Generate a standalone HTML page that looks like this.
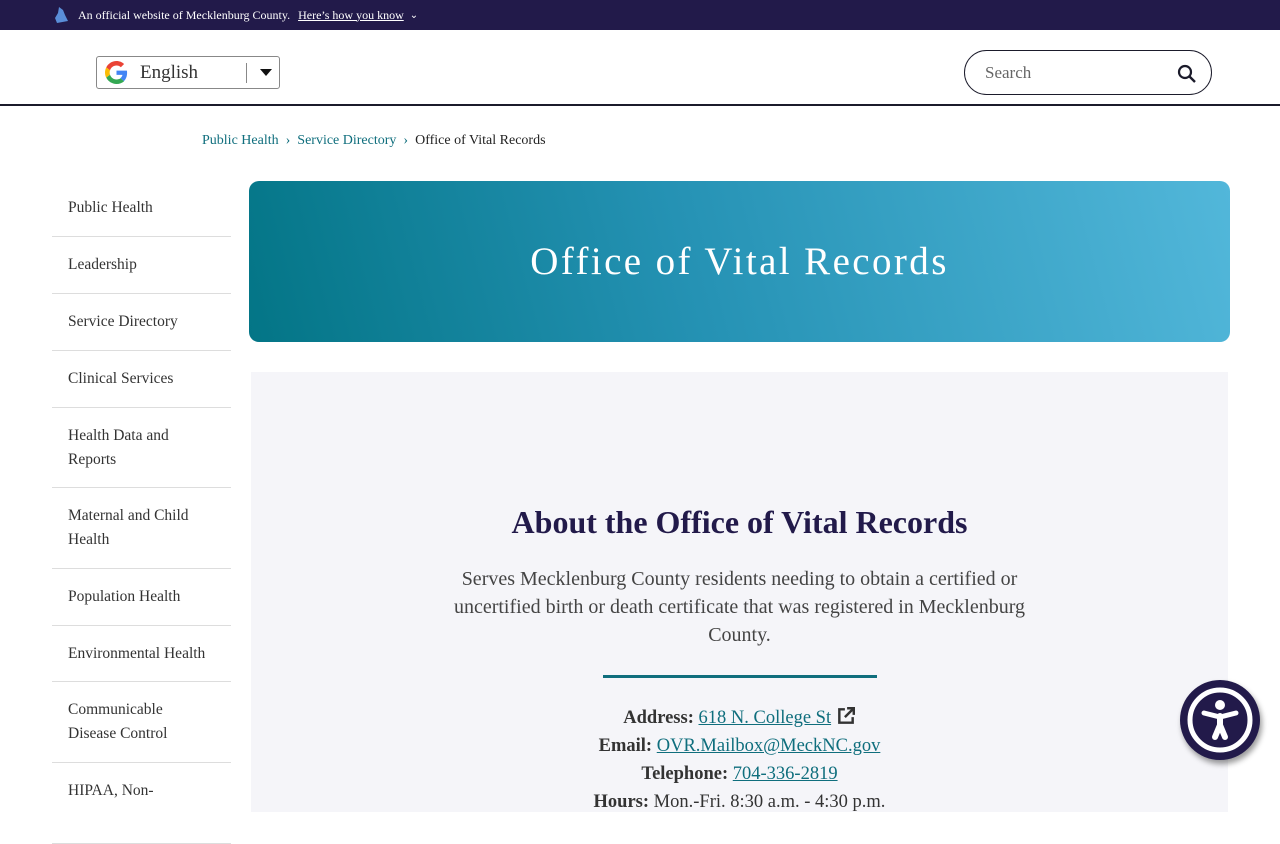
<!DOCTYPE html>
<html><head><meta charset="utf-8"><style>
*{box-sizing:border-box;margin:0;padding:0}
body{width:1280px;height:800px;overflow:hidden;background:#fff;font-family:"Liberation Serif",serif;position:relative}
.top{height:30px;background:#221a4a;color:#fff;font-size:12px;display:flex;align-items:center;padding-left:54px}
.top a{color:#fff;text-decoration:underline;margin-left:8px}
.hdr{height:76px;border-bottom:2px solid #1b1b2b;position:relative}
.lang{position:absolute;left:96px;top:26px;width:184px;height:33px;border:1px solid #888;border-radius:3px;display:flex;align-items:center;font-size:19px;color:#333}
.search{position:absolute;left:964px;top:20px;width:248px;height:45px;border:1px solid #1b1b2b;border-radius:23px;font-size:17px;color:#666;padding:12px 0 0 20px}
.bc{position:absolute;top:133px;left:202px;font-size:14px;color:#222}
.bc a{color:#0f6e7d;text-decoration:none}
.bc span.s{color:#0f6e7d;margin:0 7px}
.side{position:absolute;left:52px;top:180px;width:179px}
.side div{border-bottom:1px solid #ddd;padding:0 16px;font-size:15.5px;color:#333;line-height:24px;display:flex;align-items:center}
.side div span{width:142px}
.hero{position:absolute;left:249px;top:181px;width:981px;height:161px;border-radius:10px;background:linear-gradient(75deg,#037586 0%,#2592b4 45%,#52b7da 100%);color:#fff;font-size:39px;letter-spacing:2.4px;text-align:center;line-height:161px}
.box{position:absolute;left:251px;top:372px;width:977px;height:440px;background:#f5f5f9;text-align:center}
h2{font-size:32px;color:#221a4a;margin-top:132px}
.p{font-size:20px;color:#444;line-height:28px;width:600px;margin:24px auto 0}
.hr{width:274px;height:3px;background:#0f6e7d;margin:26px auto 0}
.c{font-size:18.5px;color:#333;line-height:28px;margin-top:26px}
.c b{color:#333}.c a{color:#0f6e7d;text-decoration:underline}
.acc{position:absolute;left:1180px;top:680px;width:80px;height:80px;border-radius:50%;background:#221a4a;box-shadow:2px 4px 6px rgba(0,0,0,.4)}
</style></head><body>
<div class="top"><svg width="16" height="18" viewBox="0 0 16 18"><path d="M5 1 L9 4 L11 9 L14 15 L3 17 L1 12 L4 7Z" fill="#5a8ed8"/></svg><span style="margin-left:8px">An official website of Mecklenburg County.</span><a>Here’s how you know</a><span style="margin-left:6px;font-size:10px">⌄</span></div>
<div class="hdr">
<div class="lang"><svg style="margin:0 12px 0 8px" width="23" height="23" viewBox="0 0 48 48"><path fill="#EA4335" d="M24 9.5c3.5 0 6.6 1.2 9.1 3.6l6.8-6.8C35.8 2.4 30.3 0 24 0 14.6 0 6.6 5.4 2.6 13.3l7.9 6.2C12.4 13.6 17.7 9.5 24 9.5z"/><path fill="#4285F4" d="M46.1 24.5c0-1.6-.1-3.1-.4-4.5H24v9h12.4c-.5 2.9-2.2 5.4-4.7 7l7.7 6c4.4-4.1 6.7-10.1 6.7-17.5z"/><path fill="#FBBC05" d="M10.5 28.6c-.5-1.4-.8-3-.8-4.6s.3-3.2.8-4.6l-7.9-6.2C.9 16.5 0 20.1 0 24s.9 7.5 2.6 10.8l7.9-6.2z"/><path fill="#34A853" d="M24 48c6.5 0 11.9-2.1 15.9-5.8l-7.7-6c-2.1 1.4-4.9 2.3-8.2 2.3-6.3 0-11.6-4.2-13.5-9.9l-7.9 6.2C6.6 42.6 14.6 48 24 48z"/></svg>English<span style="position:absolute;left:149px;top:6px;width:1px;height:20px;background:#888"></span><span style="position:absolute;left:163px;top:12px;border:6px solid transparent;border-top:7px solid #111"></span></div>
<div class="search">Search<svg style="position:absolute;right:14px;top:13px" width="20" height="20" viewBox="0 0 20 20"><circle cx="8" cy="8" r="6" stroke="#1b1b2b" stroke-width="2.2" fill="none"/><path d="M12.5 12.5L18 18" stroke="#1b1b2b" stroke-width="2.4"/></svg></div>
</div>
<div class="bc"><a>Public Health</a><span class="s">›</span><a>Service Directory</a><span class="s">›</span>Office of Vital Records</div>
<div class="side">
<div style="height:57px"><span>Public Health</span></div>
<div style="height:57px"><span>Leadership</span></div>
<div style="height:57px"><span>Service Directory</span></div>
<div style="height:57px"><span>Clinical Services</span></div>
<div style="height:80px"><span>Health Data and Reports</span></div>
<div style="height:81px"><span>Maternal and Child Health</span></div>
<div style="height:57px"><span>Population Health</span></div>
<div style="height:56px"><span>Environmental Health</span></div>
<div style="height:81px"><span>Communicable Disease Control</span></div>
<div style="height:81px;align-items:flex-start;padding-top:16px"><span>HIPAA, Non-</span></div>
</div>
<div class="hero">Office of Vital Records</div>
<div class="box">
<h2>About the Office of Vital Records</h2>
<div class="p">Serves Mecklenburg County residents needing to obtain a certified or uncertified birth or death certificate that was registered in Mecklenburg County.</div>
<div class="hr"></div>
<div class="c"><b>Address:</b> <a>618 N. College St</a> <svg width="20" height="20" viewBox="0 0 18 18" style="vertical-align:-3px"><path d="M8 3H3v12h12v-5" stroke="#333" stroke-width="2.2" fill="none"/><path d="M10 2h6v6M16 2L8 10" stroke="#333" stroke-width="2.2" fill="none"/></svg><br><b>Email:</b> <a>OVR.Mailbox@MeckNC.gov</a><br><b>Telephone:</b> <a>704-336-2819</a><br><b>Hours:</b> Mon.-Fri. 8:30 a.m. - 4:30 p.m.</div>
</div>
<div class="acc"><svg width="80" height="80" viewBox="0 0 80 80"><circle cx="40" cy="40" r="30" stroke="#fff" stroke-width="5" fill="none"/><circle cx="40" cy="25" r="5" fill="#fff"/><path d="M24 33 L40 37 L56 33" stroke="#fff" stroke-width="5" stroke-linecap="round" fill="none"/><path d="M40 36 V46 M40 45 L35 57 M40 45 L45 57" stroke="#fff" stroke-width="6" stroke-linecap="round" fill="none"/></svg></div>
</body></html>
